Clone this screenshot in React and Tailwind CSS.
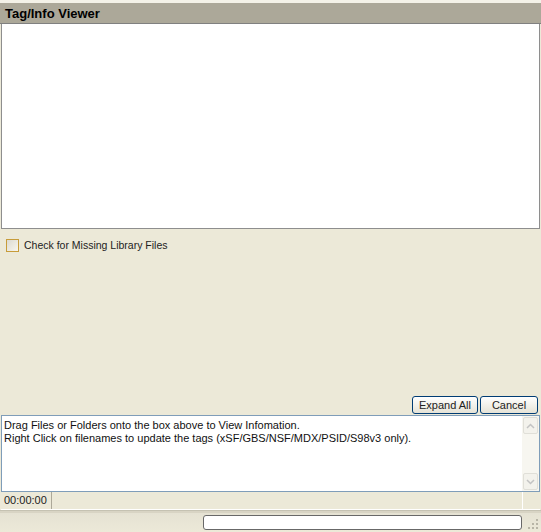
import React from "react";

// Tag/Info viewer window, XP-style
const App = () => {
  return (
    <div
      className="w-[541px] h-[532px] bg-[#ece9d8] flex flex-col text-[11px] text-black overflow-hidden"
      style={{ fontFamily: "'Liberation Sans', Arial, sans-serif" }}
    >
      {/* Header */}
      <div className="h-[3px] bg-[#f4f2e8]" />
      <div className="h-[21px] bg-[#aca899] flex items-center px-[5px] border-b border-[#808080]">
        <span className="font-bold text-[13px] leading-none">Tag/Info Viewer</span>
      </div>

      {/* Tree / drop box */}
      <div className="mx-[1px] h-[205px] bg-white border-l border-r border-b border-[#8e8e8e]" />

      {/* Options */}
      <div className="flex items-center gap-[5px] pl-[6px] mt-[10px]">
        <div className="w-[13px] h-[13px] border border-[#c79c3a] bg-gradient-to-br from-[#dcdad1] to-[#f8f6ee]" />
        <span className="text-[10.5px] leading-none text-[#222]">Check for Missing Library Files</span>
      </div>

      <div className="flex-1" />

      {/* Buttons */}
      <div className="flex justify-end gap-[2px] pr-[3px] pb-[1px]">
        <button className="w-[66px] h-[18px] rounded-[3px] border border-[#003c74] bg-gradient-to-b from-white to-[#e6e3d6] text-[11px] leading-none text-[#222]">
          Expand All
        </button>
        <button className="w-[58px] h-[18px] rounded-[3px] border border-[#003c74] bg-gradient-to-b from-white to-[#e6e3d6] text-[11px] leading-none text-[#222]">
          Cancel
        </button>
      </div>

      {/* Message box */}
      <div className="mx-[1px] h-[77px] bg-white border border-[#7f9db9] flex">
        <div className="flex-1 px-[2px] pt-[3px] text-[11px] leading-[13px] text-[#111]">
          <div>Drag Files or Folders onto the box above to View Infomation.</div>
          <div>Right Click on filenames to update the tags (xSF/GBS/NSF/MDX/PSID/S98v3 only).</div>
        </div>
        <div className="w-[17px] bg-[#f7f6f0] flex flex-col justify-between">
          <div className="h-[17px] m-[1px] rounded-[2px] border border-[#e0dfd8] bg-[#f3f2ec] flex items-center justify-center">
            <svg width="9" height="6" viewBox="0 0 9 6"><path d="M1 5 L4.5 1.5 L8 5" fill="none" stroke="#c3c3c3" strokeWidth="1.5" /></svg>
          </div>
          <div className="h-[17px] m-[1px] rounded-[2px] border border-[#e0dfd8] bg-[#f3f2ec] flex items-center justify-center">
            <svg width="9" height="6" viewBox="0 0 9 6"><path d="M1 1 L4.5 4.5 L8 1" fill="none" stroke="#c3c3c3" strokeWidth="1.5" /></svg>
          </div>
        </div>
      </div>

      {/* Status bar */}
      <div className="h-[18px] flex border-b border-[#fff] mx-[1px]">
        <div className="w-[51px] border-r border-[#aca899] flex items-center pl-[3px] text-[11px] text-[#222]">00:00:00</div>
        <div className="flex-1 border-r border-[#fff]" />
        <div className="w-[17px]" />
      </div>
      <div className="h-[3px] bg-[#d8d4c4] border-t border-[#c5c2b2]" />

      {/* Progress row */}
      <div className="h-[19px] flex items-center bg-gradient-to-b from-[#e5e2d3] to-[#ece9d8]">
        <div className="w-[203px]" />
        <div className="w-[319px] h-[15px] rounded-[3px] border border-[#686868] bg-white" />
        <div className="flex-1 flex justify-end items-end self-end pr-[2px] pb-[2px]">
          <svg width="11" height="11" viewBox="0 0 11 11">
            <g fill="#b8b5a6">
              <rect x="8" y="0" width="2" height="2" />
              <rect x="8" y="4" width="2" height="2" />
              <rect x="4" y="4" width="2" height="2" />
              <rect x="8" y="8" width="2" height="2" />
              <rect x="4" y="8" width="2" height="2" />
              <rect x="0" y="8" width="2" height="2" />
            </g>
          </svg>
        </div>
      </div>
    </div>
  );
};

export default App;
